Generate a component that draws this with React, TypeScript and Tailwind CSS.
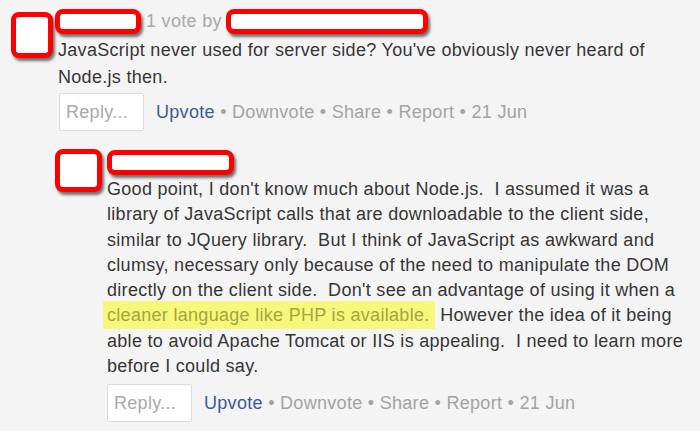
import React from 'react'

const redact = 'border-[5px] border-[#ff0000] bg-white rounded-[8px] shadow-[2px_3px_3px_rgba(0,0,0,0.55)]'

function Actions() {
  return (
    <div className="flex items-center">
      <div className="w-[85px] h-[38px] bg-white border border-[#dcdcdc] rounded-[2px] pl-[6px] flex items-center text-[#a9a9a9]">
        Reply...
      </div>
      <div className="ml-[12px] whitespace-pre text-[#a3a3a3]">
        <span className="text-[#3b5b9b]">Upvote</span> • Downvote • Share • Report • 21 Jun
      </div>
    </div>
  )
}

export default function App() {
  const reply = [
    'Good point, I don\'t know much about Node.js.  I assumed it was a',
    'library of JavaScript calls that are downloadable to the client side,',
    'similar to JQuery library.  But I think of JavaScript as awkward and',
    'clumsy, necessary only because of the need to manipulate the DOM',
    'directly on the client side.  Don\'t see an advantage of using it when a',
  ]

  return (
    <div className="w-[700px] h-[431px] overflow-hidden bg-[#f4f4f4] text-[18px] tracking-[0.3px] text-[#363636] font-['Liberation_Sans',Arial,sans-serif]">
      {/* top-level comment */}
      <div className="flex pl-[11px] pt-[9px]">
        <div className={`${redact} w-[42px] h-[46px] mt-[3px] shrink-0`} />
        <div className="ml-[2px]">
          <div className="flex items-center h-[25px]">
            <div className={`${redact} w-[86px] h-[25px]`} />
            <span className="ml-[5px] text-[#a8a8a8]">1 vote by</span>
            <div className={`${redact} w-[202px] h-[25px] ml-[4px]`} />
          </div>
          <div className="pl-[3px] mt-[3px] leading-[27px]">
            <div className="whitespace-pre">JavaScript never used for server side? You've obviously never heard of</div>
            <div className="whitespace-pre">Node.js then.</div>
          </div>
          <div className="pl-[4px] mt-[2px]">
            <Actions />
          </div>
        </div>
      </div>

      {/* reply */}
      <div className="flex pl-[55px] pt-[18px]">
        <div className={`${redact} w-[47px] h-[43px] shrink-0`} />
        <div className="ml-[5px] pt-[1px]">
          <div className={`${redact} w-[127px] h-[25px]`} />
          <div className="mt-[2px] leading-[25.3px]">
            {reply.map((line) => (
              <div key={line} className="whitespace-pre">{line}</div>
            ))}
            <div className="whitespace-pre">
              <span className="bg-[#f7f77c] text-[#a5a53e] pl-[4px] -ml-[4px] py-[4px]">cleaner language like PHP is available. </span> However the idea of it being
            </div>
            <div className="whitespace-pre">able to avoid Apache Tomcat or IIS is appealing.  I need to learn more</div>
            <div className="whitespace-pre">before I could say.</div>
          </div>
          <div className="mt-[5px]">
            <Actions />
          </div>
        </div>
      </div>
    </div>
  )
}
